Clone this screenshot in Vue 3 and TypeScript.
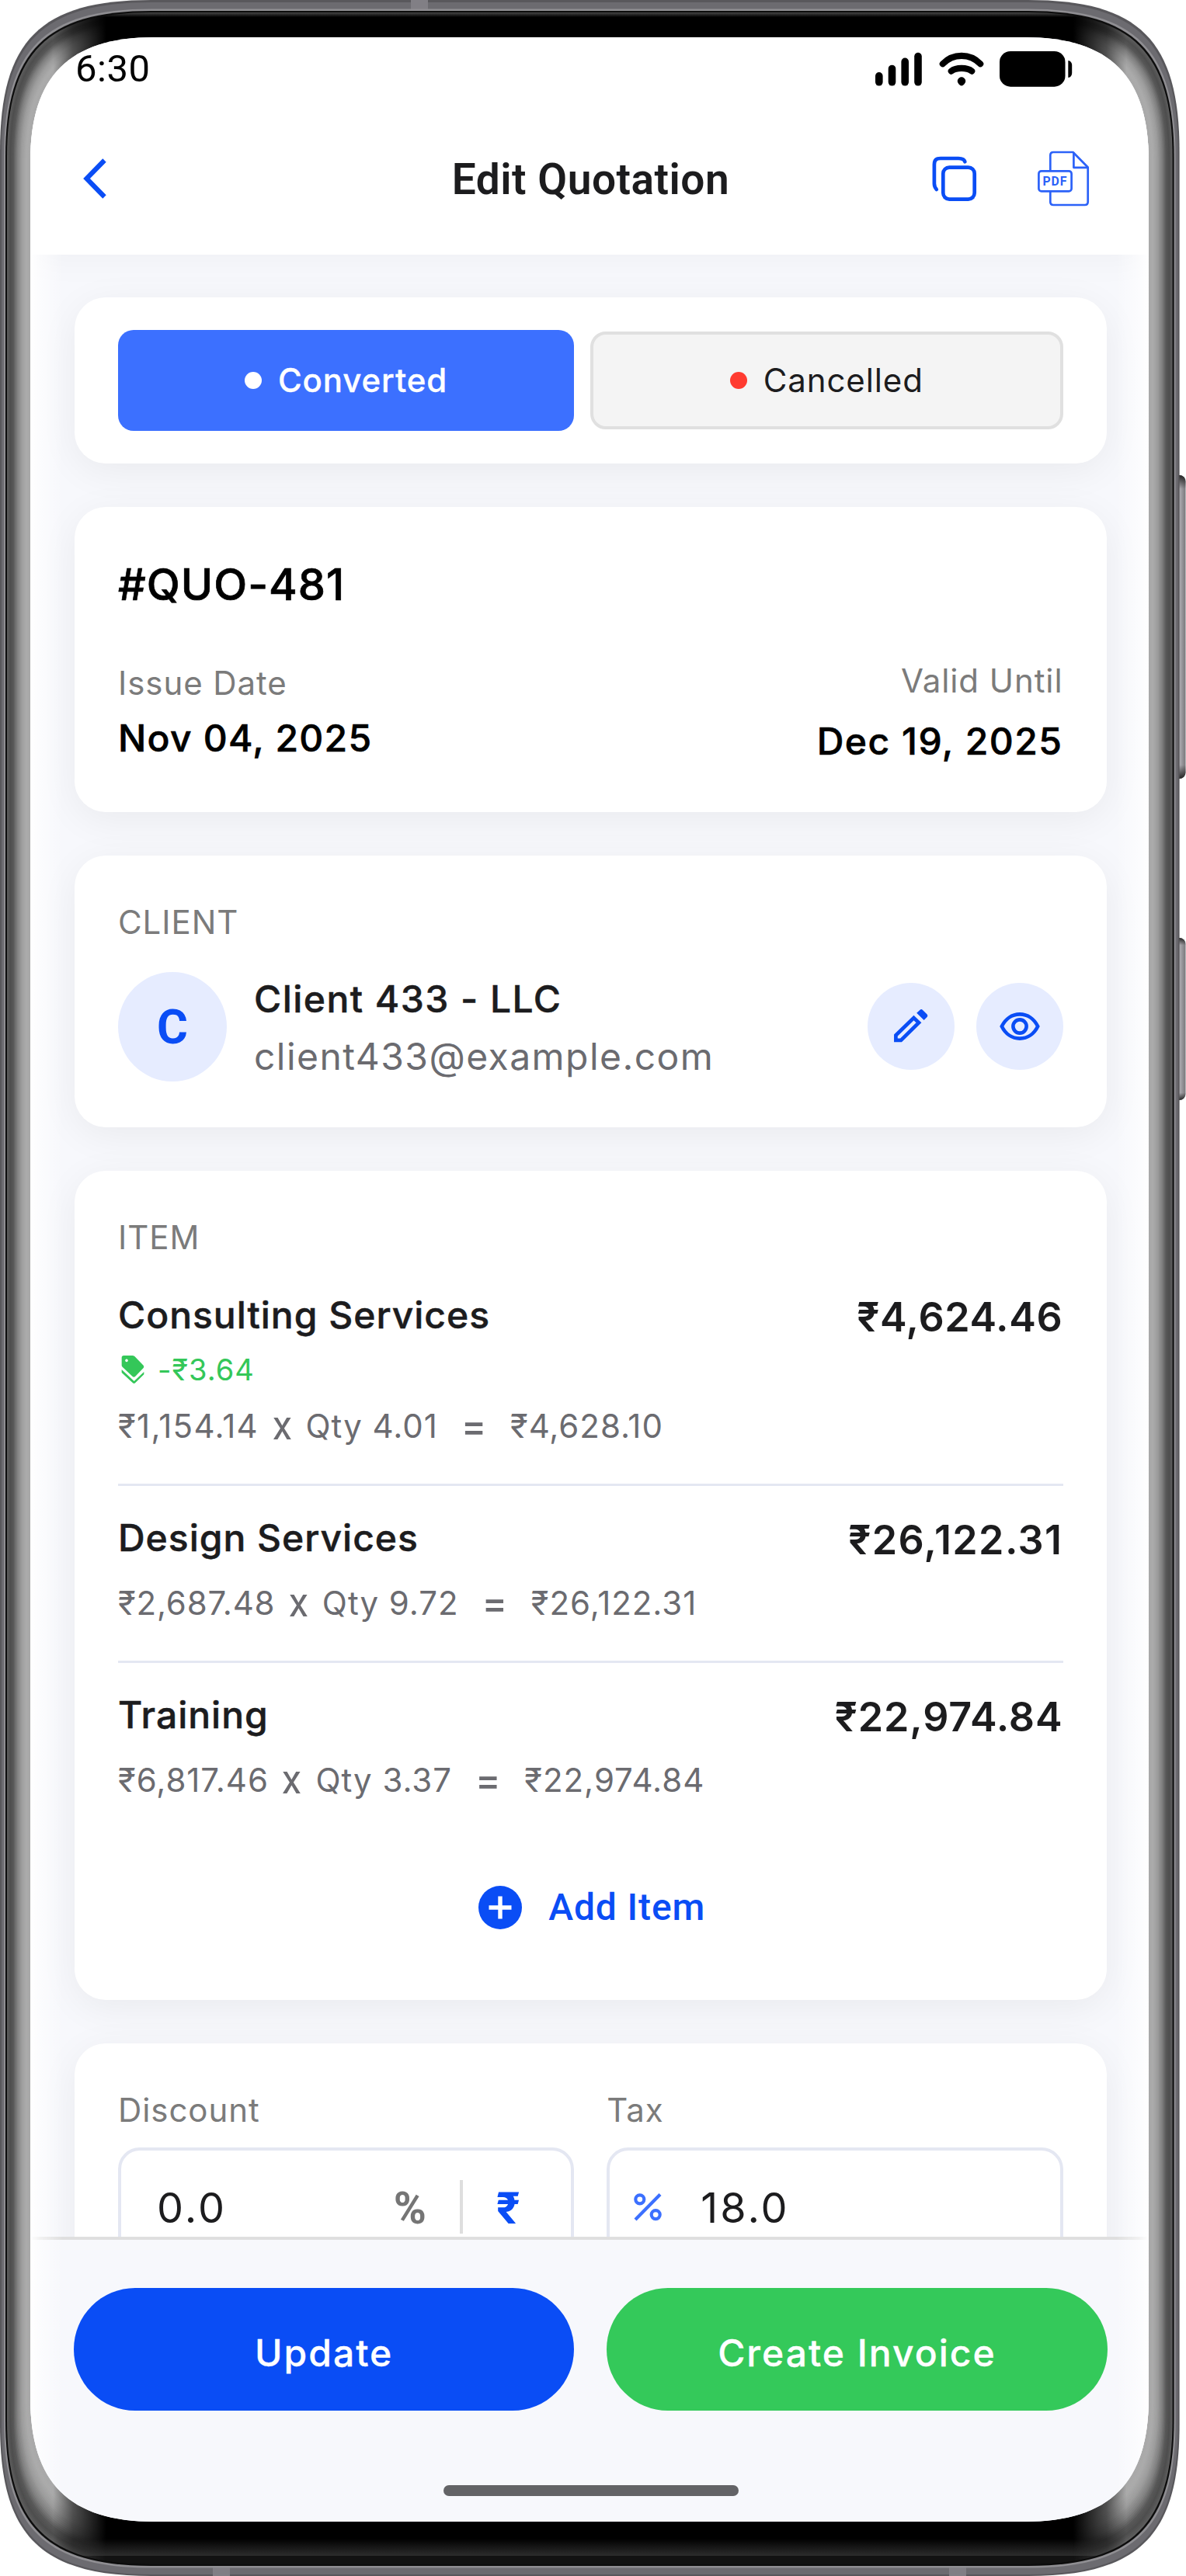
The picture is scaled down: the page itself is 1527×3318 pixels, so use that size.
<script setup lang="ts">
interface QuoteItem {
  name: string
  total: string
  totalTracking: number
  discount?: string
  rate: string
  rateTracking: number
  qty: string
  gross: string
}

const items: QuoteItem[] = [
  { name: 'Consulting Services', total: '₹4,624.46', totalTracking: 0.65, discount: '-₹3.64', rate: '₹1,154.14', rateTracking: 1.3, qty: 'Qty 4.01', gross: '₹4,628.10' },
  { name: 'Design Services', total: '₹26,122.31', totalTracking: 1.4, rate: '₹2,687.48', rateTracking: 0.8, qty: 'Qty 9.72', gross: '₹26,122.31' },
  { name: 'Training', total: '₹22,974.84', totalTracking: 0.85, rate: '₹6,817.46', rateTracking: 0.95, qty: 'Qty 3.37', gross: '₹22,974.84' },
]

// Continuous-corner rectangle used by the device shell.
function squircle(x0: number, y0: number, x1: number, y1: number, e: number, h: number): string {
  const k = e - h
  return [
    `M${x0} ${y0 + e}C${x0} ${y0 + k} ${x0 + k} ${y0} ${x0 + e} ${y0}`,
    `H${x1 - e}C${x1 - k} ${y0} ${x1} ${y0 + k} ${x1} ${y0 + e}`,
    `V${y1 - e}C${x1} ${y1 - k} ${x1 - k} ${y1} ${x1 - e} ${y1}`,
    `H${x0 + e}C${x0 + k} ${y1} ${x0} ${y1 - k} ${x0} ${y1 - e}Z`,
  ].join('')
}

const lerp = (a: number, b: number, t: number) => a + (b - a) * t

const shell = squircle(0, 0, 1518.6, 3318, 195, 143)
const shellMid = squircle(2, 3, 1516.6, 3316, 193, 141)
const rim = squircle(5, 11.5, 1513.6, 3307.5, 190, 138)
const groove = squircle(7, 14, 1511.6, 3305, 188, 136)
const bezel = squircle(9, 16, 1509.6, 3303, 186, 134)

const stops: [number, number][] = [[0, 92], [0.12, 78], [0.25, 88], [0.42, 128], [0.62, 158], [0.8, 171], [1, 168]]
function shade(t: number): string {
  let i = 1
  while (stops[i][0] < t) i++
  const [a, va] = stops[i - 1]
  const [b, vb] = stops[i]
  const v = Math.round(lerp(va, vb, (t - a) / (b - a)))
  return `rgb(${v},${v},${v})`
}
const glassSteps = Array.from({ length: 25 }, (_, i) => {
  const t = i / 24
  return {
    d: squircle(lerp(9, 39, t), lerp(16, 48, t), lerp(1509.6, 1479, t), lerp(3303, 3248, t), lerp(186, 160, t), lerp(134, 110, t)),
    fill: shade(t),
  }
})
</script>

<template>
  <div class="phone">
    <svg class="shell" width="1527" height="3318" viewBox="0 0 1527 3318" aria-hidden="true">
      <defs>
        <linearGradient id="key" x1="0" x2="1" y1="0" y2="0">
          <stop offset="0" stop-color="#6d6d70" /><stop offset=".35" stop-color="#b4b3b8" />
          <stop offset=".65" stop-color="#a5a4a9" /><stop offset="1" stop-color="#77767a" />
        </linearGradient>
        <linearGradient id="keyEnds" x1="0" x2="0" y1="0" y2="1">
          <stop offset="0" stop-color="#222" /><stop offset=".045" stop-color="#222" stop-opacity="0" />
          <stop offset=".955" stop-color="#222" stop-opacity="0" /><stop offset="1" stop-color="#222" />
        </linearGradient>
        <linearGradient id="topGlow" x1="0" x2="0" y1="0" y2="1">
          <stop offset="0" stop-color="#454545" /><stop offset="1" stop-color="#000" />
        </linearGradient>
        <linearGradient id="bottomGlow" x1="0" x2="0" y1="0" y2="1">
          <stop offset="0" stop-color="#000" /><stop offset="1" stop-color="#2d2d2d" />
        </linearGradient>
        <linearGradient id="sideFade" gradientUnits="userSpaceOnUse" x1="0" x2="1518.6" y1="0" y2="0">
          <stop offset=".045" stop-color="#fff" /><stop offset=".062" stop-color="#777" /><stop offset=".09" stop-color="#000" />
          <stop offset=".91" stop-color="#000" /><stop offset=".938" stop-color="#777" /><stop offset=".955" stop-color="#fff" />
        </linearGradient>
        <mask id="sides"><rect width="1527" height="3318" fill="url(#sideFade)" /></mask>
        <clipPath id="bezelClip"><path :d="bezel" /></clipPath>
      </defs>
      <g>
        <rect x="1508" y="612" width="18.5" height="391" rx="8" fill="url(#key)" />
        <rect x="1508" y="612" width="18.5" height="391" rx="8" fill="url(#keyEnds)" />
        <rect x="1508" y="1208" width="18.5" height="209" rx="8" fill="url(#key)" />
        <rect x="1508" y="1208" width="18.5" height="209" rx="8" fill="url(#keyEnds)" />
      </g>
      <path :d="shell" fill="#59585c" />
      <path :d="shellMid" fill="#6c6b70" />
      <g fill="#817f85">
        <rect x="529" y="0" width="22" height="14" />
        <rect x="274" y="3304" width="22" height="14" />
        <rect x="1222" y="3304" width="22" height="14" />
      </g>
      <path :d="rim" fill="#8f8e92" />
      <path :d="groove" fill="#0d0d0d" />
      <path :d="bezel" fill="#000" />
      <g clip-path="url(#bezelClip)">
        <rect y="16" width="1527" height="6" fill="url(#topGlow)" />
        <rect y="3270" width="1527" height="22" fill="url(#bottomGlow)" />
        <rect y="3292" width="1527" height="12" fill="#121212" />
      </g>
      <g mask="url(#sides)">
        <path v-for="(s, i) in glassSteps" :key="i" :d="s.d" :fill="s.fill" />
      </g>
    </svg>

    <div class="screen">
      <header class="top">
        <div class="status">
          <span class="time">6:30</span>
          <div class="signals">
            <svg width="60" height="46" viewBox="0 0 60 46">
              <rect x="0" y="27" width="9.6" height="17.6" rx="4.8" /><rect x="16.7" y="17.7" width="9.6" height="26.9" rx="4.8" />
              <rect x="33.4" y="8.6" width="9.6" height="36" rx="4.8" /><rect x="50.2" y="1.8" width="9.6" height="42.8" rx="4.8" />
            </svg>
            <svg class="wifi" width="58" height="46" viewBox="0 -1 58 46">
              <g fill="none" stroke="#000" stroke-width="8.2" stroke-linecap="round">
                <path d="M4.8 15.2C18 1.3 40 1.3 53.2 15.2" /><path d="M15.8 24.6C22 19.6 36 19.6 42.2 24.6" />
              </g>
              <path d="M29 32.3C32 32.3 34.2 35 34.2 37.4C34.2 40 31 43.4 29 43.4S23.8 40 23.8 37.4C23.8 35 26 32.3 29 32.3Z" />
            </svg>
            <svg width="94" height="46" viewBox="0 0 94 46">
              <rect x="0" y="0" width="84.5" height="45.7" rx="14" /><path d="M88.3 12C91 12 93.2 15 93.2 18V28C93.2 31 91 34 88.3 34Z" />
            </svg>
          </div>
        </div>
        <div class="bar">
          <button class="ghost back" aria-label="Back">
            <svg width="34" height="52" viewBox="0 0 34 52"><path d="M29.5 2.5L6.5 26L29.5 49.5" fill="none" stroke="#0a4df5" stroke-width="6.2" /></svg>
          </button>
          <h1>Edit Quotation</h1>
          <div class="actions">
            <svg width="58" height="60" viewBox="0 0 58 60" fill="none" stroke="#0a4df5" stroke-width="4.7" stroke-linecap="round">
              <rect x="14.3" y="15.6" width="40.4" height="41" rx="8" />
              <path d="M5.8 44C3.6 41.5 2.9 39.5 2.9 36.5V12C2.9 6 5.4 4 11 4H34C39.5 4 41.6 5.2 42.4 8.3" />
            </svg>
            <svg width="81" height="72" viewBox="0 0 81 72" fill="none" stroke="#2c62f8" stroke-width="2.7" stroke-linejoin="round">
              <path d="M17.3 25V6Q17.3 2 21.3 2H46.5L65.7 21.5V66Q65.7 70 61.7 70H21.3Q17.3 70 17.3 66V53" />
              <path d="M47.4 2.5V21.8H65.5" /><rect x="2.4" y="26.3" width="42.2" height="26" rx="3.4" />
              <text x="7.6" y="45.2" class="pdf">PDF</text>
            </svg>
          </div>
        </div>
      </header>

      <main class="content">
        <section class="card states">
          <button class="state on"><i class="dot"></i>Converted</button>
          <button class="state off"><i class="dot"></i>Cancelled</button>
        </section>

        <section class="card quote">
          <h2>#QUO-481</h2>
          <div class="dates">
            <div class="issue"><p class="label">Issue Date</p><p class="date">Nov 04, 2025</p></div>
            <div class="until"><p class="label">Valid Until</p><p class="date">Dec 19, 2025</p></div>
          </div>
        </section>

        <section class="card client">
          <p class="label caps">CLIENT</p>
          <div class="person">
            <span class="avatar">C</span>
            <div class="who"><p class="name">Client 433 - LLC</p><p class="mail">client433@example.com</p></div>
            <button class="round" aria-label="Edit client">
              <svg width="46" height="46" viewBox="0 0 46 46">
                <path d="M3.4 34.5L26.5 12L33 18.2L10 40.9H3.4Z" fill="none" stroke="#0a4df5" stroke-width="4.7" />
                <path d="M30.2 5.8L34.3 1.9Q36.3 .3 38 2L43.6 7.4Q45.2 9.3 43.6 11L39.6 14.9Z" fill="#0a4df5" />
              </svg>
            </button>
            <button class="round" aria-label="View client">
              <svg width="52" height="36" viewBox="0 0 52 36" fill="none" stroke="#0a4df5" stroke-width="4.6">
                <path d="M2.8 18C7.5 8.4 16 2.4 26 2.4S44.5 8.4 49.2 18C44.5 27.6 36 33.6 26 33.6S7.5 27.6 2.8 18Z" />
                <circle cx="26" cy="18" r="8.6" />
              </svg>
            </button>
          </div>
        </section>

        <section class="card list">
          <p class="label caps">ITEM</p>
          <div class="items">
            <article v-for="item in items" :key="item.name" class="item">
              <div class="head">
                <span class="name">{{ item.name }}</span>
                <span class="total" :style="{ letterSpacing: `${item.totalTracking}px` }">{{ item.total }}</span>
              </div>
              <div v-if="item.discount" class="less">
                <svg width="30" height="38" viewBox="0 0 90 114" fill="#34c759">
                  <path fill-rule="evenodd" d="M2 11Q2 3 10 3H43Q48 3 52 6L86 41Q90 46 86 51L55 83Q49 89 44 84L5 47Q2 44 2 41ZM21 16.5a5.5 5.5 0 1 0 .01 0Z" />
                  <path d="M2 57L50 102L88 66V76L54 109Q50 113 45 109L2 69Z" />
                </svg>
                <span>{{ item.discount }}</span>
              </div>
              <div class="calc">
                <span :style="{ letterSpacing: `${item.rateTracking}px` }">{{ item.rate }}</span>
                <span class="times">x</span><span>{{ item.qty }}</span><span class="eq">=</span><span>{{ item.gross }}</span>
              </div>
            </article>
          </div>
          <button class="ghost add">
            <svg width="56" height="56" viewBox="0 0 56 56"><circle cx="28" cy="28" r="28" fill="#0a4df5" /><path d="M28 13.5V42.5M13.5 28H42.5" stroke="#fff" stroke-width="5.4" /></svg>
            <span>Add Item</span>
          </button>
        </section>

        <section class="card adjust">
          <div class="field">
            <p class="label">Discount</p>
            <div class="input">
              <span class="value">0.0</span>
              <span class="unit">%</span><i class="sep"></i><span class="unit active">₹</span>
            </div>
          </div>
          <div class="field">
            <p class="label">Tax</p>
            <div class="input tax">
              <svg width="36" height="36" viewBox="0 0 36 36" fill="none" stroke="#3c70ff" stroke-width="4.2">
                <circle cx="7.8" cy="7.8" r="5.5" /><circle cx="28.2" cy="27.6" r="5.5" /><path d="M34 1.6L2 34" />
              </svg>
              <span class="value">18.0</span>
            </div>
          </div>
        </section>
      </main>

      <footer class="foot">
        <div class="buttons">
          <button class="cta update">Update</button>
          <button class="cta create">Create Invoice</button>
        </div>
        <div class="home"></div>
      </footer>
      <div class="edges"></div>
    </div>
  </div>
</template>

<style>
body { margin: 0; background: #fff; }
</style>

<style scoped>
.phone {
  position: relative;
  box-sizing: border-box;
  width: 1527px;
  height: 3318px;
  padding: 48px 48px 70px 39px;
  overflow: hidden;
  background: #fff;
  font-family: Inter, Roboto, sans-serif;
  color: #1c1c1e;
}
.shell { position: absolute; inset: 0; }
.screen {
  position: relative;
  display: flex;
  flex-direction: column;
  width: 1440px;
  height: 3200px;
  background: #f7f8fc;
  clip-path: path('M0 160C0 50 50 0 160 0H1280C1390 0 1440 50 1440 160V3040C1440 3150 1390 3200 1280 3200H160C50 3200 0 3150 0 3040Z');
}
.edges {
  position: absolute;
  inset: 0;
  pointer-events: none;
  background: linear-gradient(90deg, #fff 0, rgba(255, 255, 255, .6) 12px, rgba(255, 255, 255, 0) 42px, rgba(255, 255, 255, 0) 1398px, rgba(255, 255, 255, .6) 1428px, #fff 1440px);
}
p, h1, h2 { margin: 0; font-weight: 400; }
button { border: 0; padding: 0; margin: 0; font: inherit; color: inherit; white-space: nowrap; }
.ghost { background: none; }
svg { display: block; flex: none; }

.top { position: relative; flex: none; height: 280px; background: #fff; box-shadow: 0 0 50px rgba(0, 0, 0, .045); }
.status { display: flex; justify-content: space-between; height: 92px; padding: 0 98px 0 58px; }
.time { margin-top: 11px; font: 400 49px/60px Roboto, sans-serif; letter-spacing: .5px; color: #000; }
.signals { display: flex; margin-top: 18px; height: 46px; }
.wifi { margin: 0 20.5px 0 21.5px; }
.bar { box-sizing: border-box; display: grid; grid-template-columns: 1fr auto 1fr; align-items: center; height: 188px; padding: 0 63px 9px 66px; }
.back { justify-self: start; }
h1 { padding-top: 3px; font: 600 55px/64px Roboto, sans-serif; letter-spacing: .5px; }
.actions { justify-self: end; display: flex; align-items: center; gap: 77px; }
.pdf { font: 700 15.8px Roboto, sans-serif; letter-spacing: .8px; fill: #2c62f8; stroke: none; }

.content { flex: none; box-sizing: border-box; height: 2553px; padding: 55px 54px 0 57px; overflow: hidden; display: flex; flex-direction: column; gap: 56px; }
.card { box-sizing: border-box; flex: none; border-radius: 40px; background: #fff; padding: 0 56.5px 0 56px; box-shadow: 0 10px 50px rgba(0, 0, 0, .06); }
.label { font-size: 42px; line-height: 50px; letter-spacing: .92px; color: #7b7b7b; }

.states { height: 214px; display: flex; align-items: center; gap: 21px; }
.state { box-sizing: border-box; display: flex; align-items: center; justify-content: center; gap: 21px; font-size: 42px; line-height: 50px; letter-spacing: .88px; }
.dot { width: 22px; height: 22px; border-radius: 50%; background: #fff; }
.on { width: 587px; height: 130px; border-radius: 20px; background: #3c70ff; color: #fff; font-weight: 500; -webkit-text-stroke: .3px currentColor; }
.off { flex: 1; height: 126px; border: 4px solid #e0e0e0; border-radius: 20px; background: #f4f4f4; }
.off .dot { background: #ff3b30; }

.quote { height: 393px; padding-top: 65px; }
h2 { font-size: 56px; line-height: 70px; font-weight: 500; letter-spacing: 1px; color: #000; -webkit-text-stroke: .7px currentColor; }
.dates { display: flex; justify-content: space-between; align-items: flex-start; margin-top: 63.5px; }
.issue { padding-top: 3px; }
.until { text-align: right; }
.date { margin-top: 17.5px; font-size: 48px; line-height: 58px; font-weight: 500; letter-spacing: 1.25px; color: #000; -webkit-text-stroke: .6px currentColor; }
.until .date { margin-top: 24.5px; letter-spacing: 1.5px; }

.client { height: 350px; padding-top: 60.5px; }
.person { display: flex; align-items: center; margin-top: 39px; height: 141px; }
.avatar { box-sizing: border-box; width: 140px; height: 141px; padding-top: 2px; border-radius: 50%; background: #e6ecff; color: #0a4df5; font: 700 61px/139px Roboto, sans-serif; text-align: center; }
.who { flex: 1; padding: 4px 0 0 35px; }
.name { font-size: 48px; line-height: 58px; font-weight: 500; letter-spacing: .98px; -webkit-text-stroke: .5px currentColor; }
.who .name { letter-spacing: 1.45px; }
.mail { margin-top: 16.5px; font-size: 48px; line-height: 58px; letter-spacing: 1.45px; color: #6b6b70; }
.round { display: flex; align-items: center; justify-content: center; width: 112px; height: 112px; border-radius: 50%; background: #e6ecff; }
.round + .round { margin-left: 28px; }

.list { height: 1068px; padding-top: 61px; }
.items { margin-top: 46px; }
.item { padding-bottom: 49px; }
.item + .item { border-top: 3px solid #e4e7f2; padding-top: 38px; }
.item:last-child { padding-bottom: 0; }
.head { display: flex; justify-content: space-between; height: 58px; }
.total { padding-top: 3px; font-size: 52px; line-height: 58px; font-weight: 600; }
.less { display: flex; align-items: center; gap: 17px; margin: 18px 0 -5px 4px; height: 46px; font-size: 38px; letter-spacing: 1px; color: #34c759; }
.calc { display: flex; align-items: flex-start; height: 50px; margin-top: 30px; font-size: 42px; line-height: 50px; letter-spacing: .97px; color: #6b6b70; }
.times { width: 25px; margin: 0 18px 0 17.5px; font: 400 54px/50px Roboto, sans-serif; letter-spacing: 0; transform: translateY(-1px) scaleX(.93); transform-origin: 0 0; }
.eq { margin: 0 30.5px 0 30px; font-size: 49px; font-weight: 500; letter-spacing: 0; line-height: 50px; }
.add { display: flex; align-items: center; justify-content: center; gap: 34px; width: 100%; height: 56px; margin-top: 111px; padding-left: 4px; font: 500 48px/58px Roboto, sans-serif; letter-spacing: .9px; color: #0a4df5; }

.adjust { height: 400px; padding-top: 60.5px; display: flex; gap: 42px; }
.field { flex: 1; }
.input { box-sizing: border-box; display: flex; align-items: center; height: 154px; margin-top: 23px; padding: 0 51px 0 46px; border: 4px solid #e4e7f2; border-radius: 28px; }
.value { flex: 1; padding-top: 2px; font-size: 54px; line-height: 66px; letter-spacing: 3px; }
.unit { width: 60px; padding-top: 5px; font: 700 57px/66px Roboto, sans-serif; text-align: center; color: #757575; }
.unit.active { color: #0a4df5; }
.sep { width: 4px; height: 69px; margin: 0 28px 0 34.5px; background: #dedede; }
.tax { padding-left: 31px; }
.tax .value { margin-left: 50px; }

.foot { position: relative; flex: 1; border-top: 4px solid #dfdfdf; background: #f7f8fc; }
.buttons { display: flex; gap: 42px; padding: 61.5px 53.5px 0 56px; }
.cta { flex: 1; box-sizing: border-box; height: 158px; padding-top: 10px; border-radius: 79px; color: #fff; font-size: 48px; font-weight: 500; letter-spacing: 2px; -webkit-text-stroke: .3px currentColor; }
.update { background: #0a4df5; }
.create { background: #34c95a; }
.home { width: 380px; height: 14px; margin: 96.5px 0 0 531.5px; border-radius: 7px; background: #636366; }
</style>
